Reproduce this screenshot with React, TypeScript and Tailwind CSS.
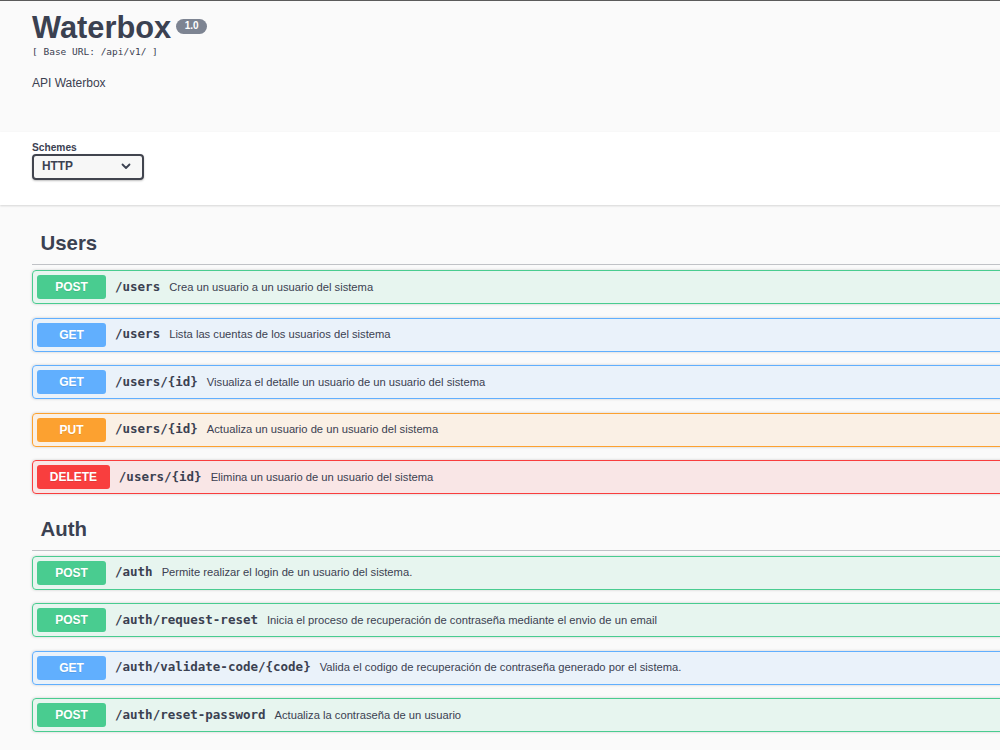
import React from "react";

type Method = "POST" | "GET" | "PUT" | "DELETE";

const styles: Record<Method, { row: string; badge: string }> = {
  POST: {
    row: "border-[#49cc90] bg-[rgba(73,204,144,0.1)]",
    badge: "bg-[#49cc90]",
  },
  GET: {
    row: "border-[#61affe] bg-[rgba(97,175,254,0.1)]",
    badge: "bg-[#61affe]",
  },
  PUT: {
    row: "border-[#fca130] bg-[rgba(252,161,48,0.1)]",
    badge: "bg-[#fca130]",
  },
  DELETE: {
    row: "border-[#f93e3e] bg-[rgba(249,62,62,0.1)]",
    badge: "bg-[#f93e3e]",
  },
};

function Op({ method, path, desc }: { method: Method; path: string; desc: string }) {
  const s = styles[method];
  return (
    <div
      className={`mb-[13.5px] flex h-[34px] items-center rounded-[4px] border px-[4px] shadow-[0_0_3px_rgba(0,0,0,0.19)] ${s.row}`}
    >
      <div
        className={`flex h-[24px] min-w-[69px] items-center justify-center rounded-[3px] px-[12.75px] text-[12px] font-bold text-white [text-shadow:0_1px_0_rgba(0,0,0,0.1)] ${s.badge}`}
        style={{ fontFamily: '"Liberation Sans", Arial, sans-serif' }}
      >
        {method}
      </div>
      <span
        className="ml-[9px] text-[12.5px] font-bold text-[#3b4151]"
        style={{ fontFamily: '"DejaVu Sans Mono", monospace' }}
      >
        {path}
      </span>
      <span className="ml-[9px] text-[11.2px] text-[#3b4151]">{desc}</span>
    </div>
  );
}

function Tag({ name }: { name: string }) {
  return (
    <div className="mb-[5px] border-b border-[rgba(59,65,81,0.3)] pb-[9px] pl-[8.5px] pt-[9px]">
      <h3 className="text-[20.4px] font-bold leading-[24px] text-[#3b4151]">{name}</h3>
    </div>
  );
}

export default function App() {
  return (
    <div
      className="min-h-[750px] w-full overflow-hidden bg-[#fafafa] text-[#3b4151]"
      style={{ fontFamily: '"Liberation Sans", Arial, sans-serif' }}
    >
      <div className="w-[1400px]">
        <div className="h-px bg-[#5b5b5b]" />
        {/* Info */}
        <div className="pl-[32px] pt-[8.5px]">
          <div className="flex items-start">
            <h2 className="text-[30.8px] font-bold leading-[36px] text-[#3b4151]">Waterbox</h2>
            <span className="ml-[5px] mt-[9px] flex h-[15px] items-center rounded-full bg-[#7d8492] px-[8.5px] text-[10px] font-bold leading-none text-white">
              1.0
            </span>
          </div>
          <div
            className="text-[9.5px] leading-[12px] text-[#3b4151]"
            style={{ fontFamily: '"DejaVu Sans Mono", monospace' }}
          >
            [ Base URL: /api/v1/ ]
          </div>
          <p className="mt-[17px] text-[12px] leading-[16px] text-[#3b4151]">API Waterbox</p>
        </div>

        {/* Schemes */}
        <div className="mt-[41px] bg-white pb-[25px] pl-[32px] pt-[10px] shadow-[0_1px_2px_0_rgba(0,0,0,0.15)]">
          <div className="text-[10.2px] font-bold leading-[12px] text-[#3b4151]">Schemes</div>
          <div className="flex h-[26px] w-[112px] items-center justify-between rounded-[4px] border-2 border-[#41444e] bg-[#f7f7f7] pl-[8px] pr-[11px] shadow-[0_1px_2px_0_rgba(0,0,0,0.25)]">
            <span className="text-[11.9px] font-bold text-[#3b4151]">HTTP</span>
            <svg width="10" height="7" viewBox="0 0 10 7" fill="none">
              <polyline points="1.5,1.5 5,5 8.5,1.5" stroke="#3b4151" strokeWidth="1.8" strokeLinecap="round" strokeLinejoin="round" />
            </svg>
          </div>
        </div>

        {/* Operations */}
        <div className="pl-[32px] pt-[17.5px]">
          <Tag name="Users" />
          <Op method="POST" path="/users" desc="Crea un usuario a un usuario del sistema" />
          <Op method="GET" path="/users" desc="Lista las cuentas de los usuarios del sistema" />
          <Op method="GET" path="/users/{id}" desc="Visualiza el detalle un usuario de un usuario del sistema" />
          <Op method="PUT" path="/users/{id}" desc="Actualiza un usuario de un usuario del sistema" />
          <Op method="DELETE" path="/users/{id}" desc="Elimina un usuario de un usuario del sistema" />

          <Tag name="Auth" />
          <Op method="POST" path="/auth" desc="Permite realizar el login de un usuario del sistema." />
          <Op
            method="POST"
            path="/auth/request-reset"
            desc="Inicia el proceso de recuperación de contraseña mediante el envio de un email"
          />
          <Op
            method="GET"
            path="/auth/validate-code/{code}"
            desc="Valida el codigo de recuperación de contraseña generado por el sistema."
          />
          <Op method="POST" path="/auth/reset-password" desc="Actualiza la contraseña de un usuario" />
        </div>
      </div>
    </div>
  );
}
